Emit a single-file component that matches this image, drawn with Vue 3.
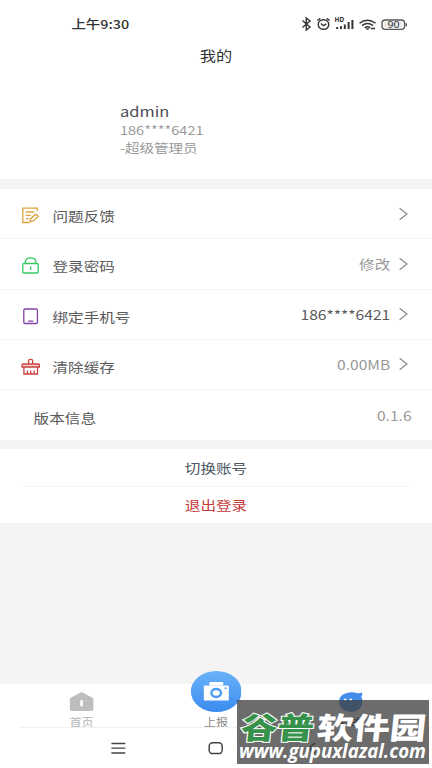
<script setup>
const rows = [
  { icon: 'feedback', label: '问题反馈', value: '', arrow: true },
  { icon: 'lock', label: '登录密码', value: '修改', arrow: true },
  { icon: 'phone', label: '绑定手机号', value: '186****6421', arrow: true, dark: true },
  { icon: 'clean', label: '清除缓存', value: '0.00MB', arrow: true },
  { icon: '', label: '版本信息', value: '0.1.6', arrow: false },
]
</script>

<template>
  <div class="viewport">
    <div class="screen">
      <header class="status">
        <span class="clock">上午9:30</span>
        <svg class="status-icons" viewBox="0 0 110 18" preserveAspectRatio="none" fill="none" stroke="#333" stroke-width="1.4">
          <path d="M2.5 5.5 L10 12 L6.3 15 V3 L10 6 L2.5 12.5" />
          <ellipse cx="23.5" cy="9.5" rx="5.3" ry="4.8" />
          <path d="M17.3 5.5 L20.3 3.4 M29.7 5.5 L26.7 3.4 M20.8 8.5 L23.5 10.7 L26.3 8.8" />
          <text x="34.5" y="7" class="hd">HD</text>
          <path stroke-width="2" d="M37.2 12v2 M41 11.2v2.8 M44.8 9.4v4.6 M48.6 7v7 M52.4 5v9" />
          <path d="M59.5 8.2 Q67.5 2.2 75.5 8.2 M62 10.6 Q67.5 6.3 73 10.6 M64.7 12.9 Q67.5 10.6 70.3 12.9" />
          <path d="M66.3 14 h2.4 M71 13.5h4" stroke-width="1.6" />
          <rect x="82" y="5" width="22.6" height="9.4" rx="3.4" stroke="#555" />
          <rect x="84" y="6.6" width="18.6" height="6.2" rx="2" fill="#e9e9e9" stroke="none" />
          <path d="M106.3 8.2v3" stroke="#555" />
          <text x="87.5" y="12.7" textLength="12" lengthAdjust="spacingAndGlyphs" class="battery">90</text>
        </svg>
      </header>
      <h1 class="title">我的</h1>
      <section class="profile">
        <div class="name">admin</div>
        <div class="sub">186****6421</div>
        <div class="sub">-超级管理员</div>
      </section>

      <section class="list">
        <div v-for="row in rows" :key="row.label" class="row">
          <svg v-if="row.icon" class="row-icon" viewBox="0 0 20 20" preserveAspectRatio="none" fill="none" stroke-width="1.3">
            <g v-if="row.icon === 'feedback'" stroke="#dba43e">
              <path d="M17 6V3.2H2.4V17.5H9 M5.4 7h8.5 M5.4 10.3h5 M5.4 13.6h3" />
              <path d="M9.5 16.9 L10.3 13.7 L15.3 9.2 L18 11.3 L13 15.9 Z" />
            </g>
            <g v-else-if="row.icon === 'lock'" stroke="#35cc62">
              <rect x="2.4" y="8.5" width="15.4" height="9.5" rx="1" />
              <path d="M4.8 8.5V7.6Q5 2.8 10.2 2.8Q15.4 2.8 15.6 7.6V8.5 M10.3 11.5v3.5" />
            </g>
            <g v-else-if="row.icon === 'phone'" stroke="#8340a8">
              <rect x="3.4" y="3" width="13.6" height="14.5" rx="1.2" />
              <path d="M7.8 15.2h5" />
            </g>
            <g v-else stroke="#cc4040">
              <path d="M8.2 7.8V4.3Q8.2 3.3 10.2 3.3Q12.2 3.3 12.2 4.3V7.8" />
              <path d="M2.6 8H18Q19 8 19 9V11H1.6V9Q1.6 8 2.6 8Z" fill="#f3cfcf" />
              <path d="M3.5 11V18H17.1V11 M7 18V14.5 M10.3 18V14.5 M13.7 18V14.5" />
            </g>
          </svg>
          <span class="label">{{ row.label }}</span>
          <span class="value" :class="{ dark: row.dark }">{{ row.value }}</span>
          <svg v-if="row.arrow" class="chevron" viewBox="0 0 10 14" preserveAspectRatio="none" fill="none" stroke="#888" stroke-width="1.2">
            <path d="M1.2 1.2 L8.6 7 L1.2 12.8" />
          </svg>
        </div>
      </section>

      <section class="actions">
        <div class="action">切换账号</div>
        <div class="action logout">退出登录</div>
      </section>

      <footer class="bottom">
        <nav class="tabs">
          <div class="tab first">
            <svg class="tab-icon" viewBox="0 0 24 20" preserveAspectRatio="none">
              <path d="M0 8 Q0 6.5 1.2 5.8 L10.5 .7 Q12 0 13.5 .7 L22.8 5.8 Q24 6.5 24 8 V17.2 Q24 19.5 21.5 19.5 H2.5 Q0 19.5 0 17.2Z" fill="#bdbdbd" />
              <path d="M12 8.5v6" stroke="#fff" stroke-width="2.6" />
            </svg>
            <span class="home-text">首页</span>
          </div>
          <div class="tab">
            <svg class="camera" viewBox="0 0 51 41" preserveAspectRatio="none">
              <defs>
                <linearGradient id="blue" x1="0" y1="0" x2="0" y2="1">
                  <stop offset="0" stop-color="#69b3fa" />
                  <stop offset="1" stop-color="#3b8bef" />
                </linearGradient>
              </defs>
              <ellipse cx="25.5" cy="20.5" rx="25.5" ry="20.5" fill="url(#blue)" />
              <rect x="18.5" y="11" width="14" height="3.5" rx="1" fill="#fff" />
              <rect x="13" y="14.4" width="25" height="15.2" rx="1.2" fill="#fff" />
              <ellipse cx="25.4" cy="22" rx="4.8" ry="4" fill="none" stroke="#4b9cf3" stroke-width="2.4" />
              <circle cx="34.8" cy="17.2" r="1" fill="#4b9cf3" />
            </svg>
            <span>上报</span>
          </div>
          <div class="tab last">
            <svg class="tab-icon mine" viewBox="0 0 25 21" preserveAspectRatio="none">
              <path d="M12.5 1.2 Q16.5 1 19 2.2 Q22 2.5 24.5 1.2 Q24.5 4 22.8 5.8 Q24.6 8 24.4 11 Q23.5 20 12.5 21 Q1 20 .6 10.5 Q1 2.2 12.5 1.2Z" fill="#438eed" />
              <path d="M5.5 8.7h2.6 M11 8.7h2.6" stroke="#fff" stroke-width="2" />
            </svg>
            <span class="mine-text">我的</span>
          </div>
        </nav>
        <div class="keys">
          <svg viewBox="0 0 16 14" preserveAspectRatio="none" fill="none" stroke="#444" stroke-width="1.3"><path d="M1 2.5h14 M1 7.2h14 M1 12h14" /></svg>
          <svg viewBox="0 0 16 14" preserveAspectRatio="none" fill="none" stroke="#444" stroke-width="1.5"><rect x="1.6" y="1.8" width="13" height="10.8" rx="3.4" /></svg>
          <svg viewBox="0 0 16 14" preserveAspectRatio="none" fill="none" stroke="#333" stroke-width="1.5"><path d="M9 2L3 7L9 12" /></svg>
        </div>
      </footer>
    </div>

    <svg class="watermark" viewBox="0 0 192 64">
      <g transform="translate(0 39) skewX(-6)" class="brand">
        <text x="3" y="0" textLength="73" lengthAdjust="spacingAndGlyphs" class="green">谷普</text>
        <text x="79" y="0" textLength="109" lengthAdjust="spacingAndGlyphs" class="white">软件园</text>
      </g>
      <text x="2" y="57.5" textLength="187" lengthAdjust="spacingAndGlyphs" class="url">www.gupuxlazal.com</text>
    </svg>
  </div>
</template>

<style>
body { margin: 0; background: #f4f4f4; }
</style>

<style scoped>
.viewport {
  position: relative;
  width: 432px;
  height: 768px;
  overflow: hidden;
  font-family: "Noto Sans CJK SC", sans-serif;
}
/* The 360px layout is stretched to the full 432px width. */
.screen {
  display: flex;
  flex-direction: column;
  width: 360px;
  height: 768px;
  transform: scaleX(1.2);
  transform-origin: 0 0;
  background: #f4f4f4;
  color: #5a5a5a;
  font-size: 13px;
}
.status {
  display: flex;
  justify-content: space-between;
  align-items: center;
  height: 38px;
  padding: 10px 18.5px 0 59.5px;
  box-sizing: border-box;
  background: #fff;
}
.clock { font-size: 12px; font-weight: 500; line-height: 18px; color: #333; }
.status-icons { width: 91.7px; height: 18px; }
.hd { font: 700 6.5px "Noto Sans", sans-serif; fill: #333; stroke: none; }
.battery { font: 9px "Noto Sans", sans-serif; fill: #333; stroke: none; }
.title {
  margin: 0;
  height: 36px;
  line-height: 34px;
  font-size: 13.5px;
  font-weight: 400;
  text-align: center;
  color: #333;
  background: #fff;
}
.profile { height: 105px; padding: 28px 0 0 100px; box-sizing: border-box; background: #fff; }
.name { font-size: 13.7px; line-height: 19px; color: #4c4c55; }
.sub { font-size: 12.1px; line-height: 18px; color: #999; }
.list { margin-top: 10px; background: #fff; }
.row {
  display: flex;
  align-items: center;
  height: 50.25px;
  padding: 0 17px;
  box-sizing: border-box;
  border-bottom: 1px solid #f6f6f6;
}
.row:last-child { padding-left: 28px; border-bottom: 0; }
.row-icon { width: 16.7px; height: 20px; margin-right: 10px; padding-top: 3px; }
.label { flex: 1; padding-top: 4px; }
.value { color: #999; }
.value.dark { color: #5a5a5a; }
.chevron { width: 8.3px; height: 14px; margin-left: 7px; margin-right: 2.5px; }
.actions { margin-top: 9px; padding: 0 17px; background: #fff; }
.action { height: 37px; line-height: 38px; text-align: center; color: #505762; }
.logout { height: 37px; line-height: 35px; color: #c43b3b; border-top: 1px solid #f4f4f4; box-sizing: border-box; }
.bottom { margin-top: auto; height: 84px; background: #fff; }
.tabs {
  display: flex;
  height: 44px;
  margin-left: 17px;
  border-bottom: 1px solid #f1f1f1;
  box-sizing: border-box;
}
.tab {
  display: flex;
  flex: 1;
  flex-direction: column;
  align-items: center;
  justify-content: flex-end;
  font-size: 10px;
  line-height: 10px;
  color: #888;
}
.first { margin-left: -5px; }
.last { margin-right: 12px; }
.home-text { color: #b5b5b5; }
.mine-text { color: #222; }
.tab-icon { width: 20px; height: 19.5px; margin-bottom: 5.5px; }
.mine { width: 20.8px; height: 21px; }
.camera { width: 42.5px; height: 41px; margin-bottom: 5px; flex: none; }
.keys { display: flex; justify-content: center; gap: 68px; padding-top: 13px; }
.keys svg { width: 13.3px; height: 14px; }
.watermark {
  position: absolute;
  left: 237px;
  top: 700px;
  width: 192px;
  height: 64px;
  overflow: visible;
  background: rgba(64, 64, 64, 0.77);
}
.brand { font-size: 30px; font-weight: 900; }
.green { fill: #36914a; stroke: #fff; stroke-width: 2px; paint-order: stroke; }
.white { fill: #fff; }
.url { font: italic 700 19px "Open Sans", sans-serif; fill: #fff; }
</style>
